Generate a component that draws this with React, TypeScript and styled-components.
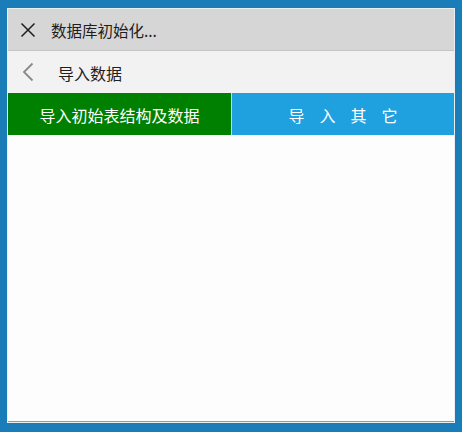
import React from "react";
import styled, { createGlobalStyle } from "styled-components";

const Global = createGlobalStyle`
  html, body { margin: 0; padding: 0; }
  body {
    background: #1a7db7;
    font-family: "Noto Sans CJK SC", "Noto Sans", sans-serif;
    width: 462px;
    height: 432px;
    overflow: hidden;
  }
`;

const Stage = styled.div`
  padding: 8px 7px 9px 7px;
  box-sizing: border-box;
  height: 432px;
`;

const Window = styled.div`
  height: 415px;
  box-sizing: border-box;
  border: 1px solid #e9eef2;
  border-bottom: none;
  background: #fdfdfd;
  display: flex;
  flex-direction: column;
`;

const TitleBar = styled.div`
  height: 41px;
  flex: none;
  background: #d6d6d6;
  border-bottom: 1px solid #c6c6c6;
  display: flex;
  align-items: center;
  gap: 14px;
  padding-left: 11px;
`;

const IconBox = styled.div<{ $h?: number }>`
  width: 18px;
  height: ${(p) => p.$h ?? 18}px;
  display: flex;
  align-items: center;
  justify-content: center;
`;

const TitleText = styled.span`
  font-size: 15.5px;
  color: #1e1e1e;
`;

const NavBar = styled.div`
  height: 42px;
  flex: none;
  background: #f2f2f2;
  display: flex;
  align-items: center;
  gap: 21px;
  padding-left: 11px;
`;

const NavText = styled.span`
  font-size: 16px;
  color: #1e1e1e;
  margin-top: 2px;
`;

const Tabs = styled.div`
  height: 42px;
  flex: none;
  display: grid;
  grid-template-columns: 223px 1fr;
  gap: 1px;
  background: #c9e3c9;
`;

const Tab = styled.div<{ $bg: string; $spacing?: number }>`
  background: ${(p) => p.$bg};
  color: #ffffff;
  font-size: 16px;
  display: flex;
  align-items: center;
  justify-content: center;
  letter-spacing: ${(p) => p.$spacing ?? 0}px;
  padding-left: ${(p) => p.$spacing ?? 0}px;
  padding-top: 1px;
`;

const Content = styled.div`
  flex: 1;
  background: #fdfdfd;
  border-bottom: 1px solid #8d9aa3;
  box-shadow: 0 1px 0 #e8eef2;
  margin-bottom: 1px;
`;

export default function App() {
  return (
    <Stage>
      <Global />
      <Window>
        <TitleBar>
          <IconBox>
            <svg width="16" height="16" viewBox="0 0 16 16">
              <path d="M1.5 1.5 L14.5 14.5 M14.5 1.5 L1.5 14.5" stroke="#1e1e1e" strokeWidth="1.5" fill="none" />
            </svg>
          </IconBox>
          <TitleText>数据库初始化...</TitleText>
        </TitleBar>
        <NavBar>
          <IconBox $h={20}>
            <svg width="12" height="20" viewBox="0 0 12 20">
              <path d="M10.5 1.5 L2 10 L10.5 18.5" stroke="#8a8a8a" strokeWidth="1.8" fill="none" />
            </svg>
          </IconBox>
          <NavText>导入数据</NavText>
        </NavBar>
        <Tabs>
          <Tab $bg="#008000">导入初始表结构及数据</Tab>
          <Tab $bg="#1fa0df" $spacing={15}>导入其它</Tab>
        </Tabs>
        <Content />
      </Window>
    </Stage>
  );
}
